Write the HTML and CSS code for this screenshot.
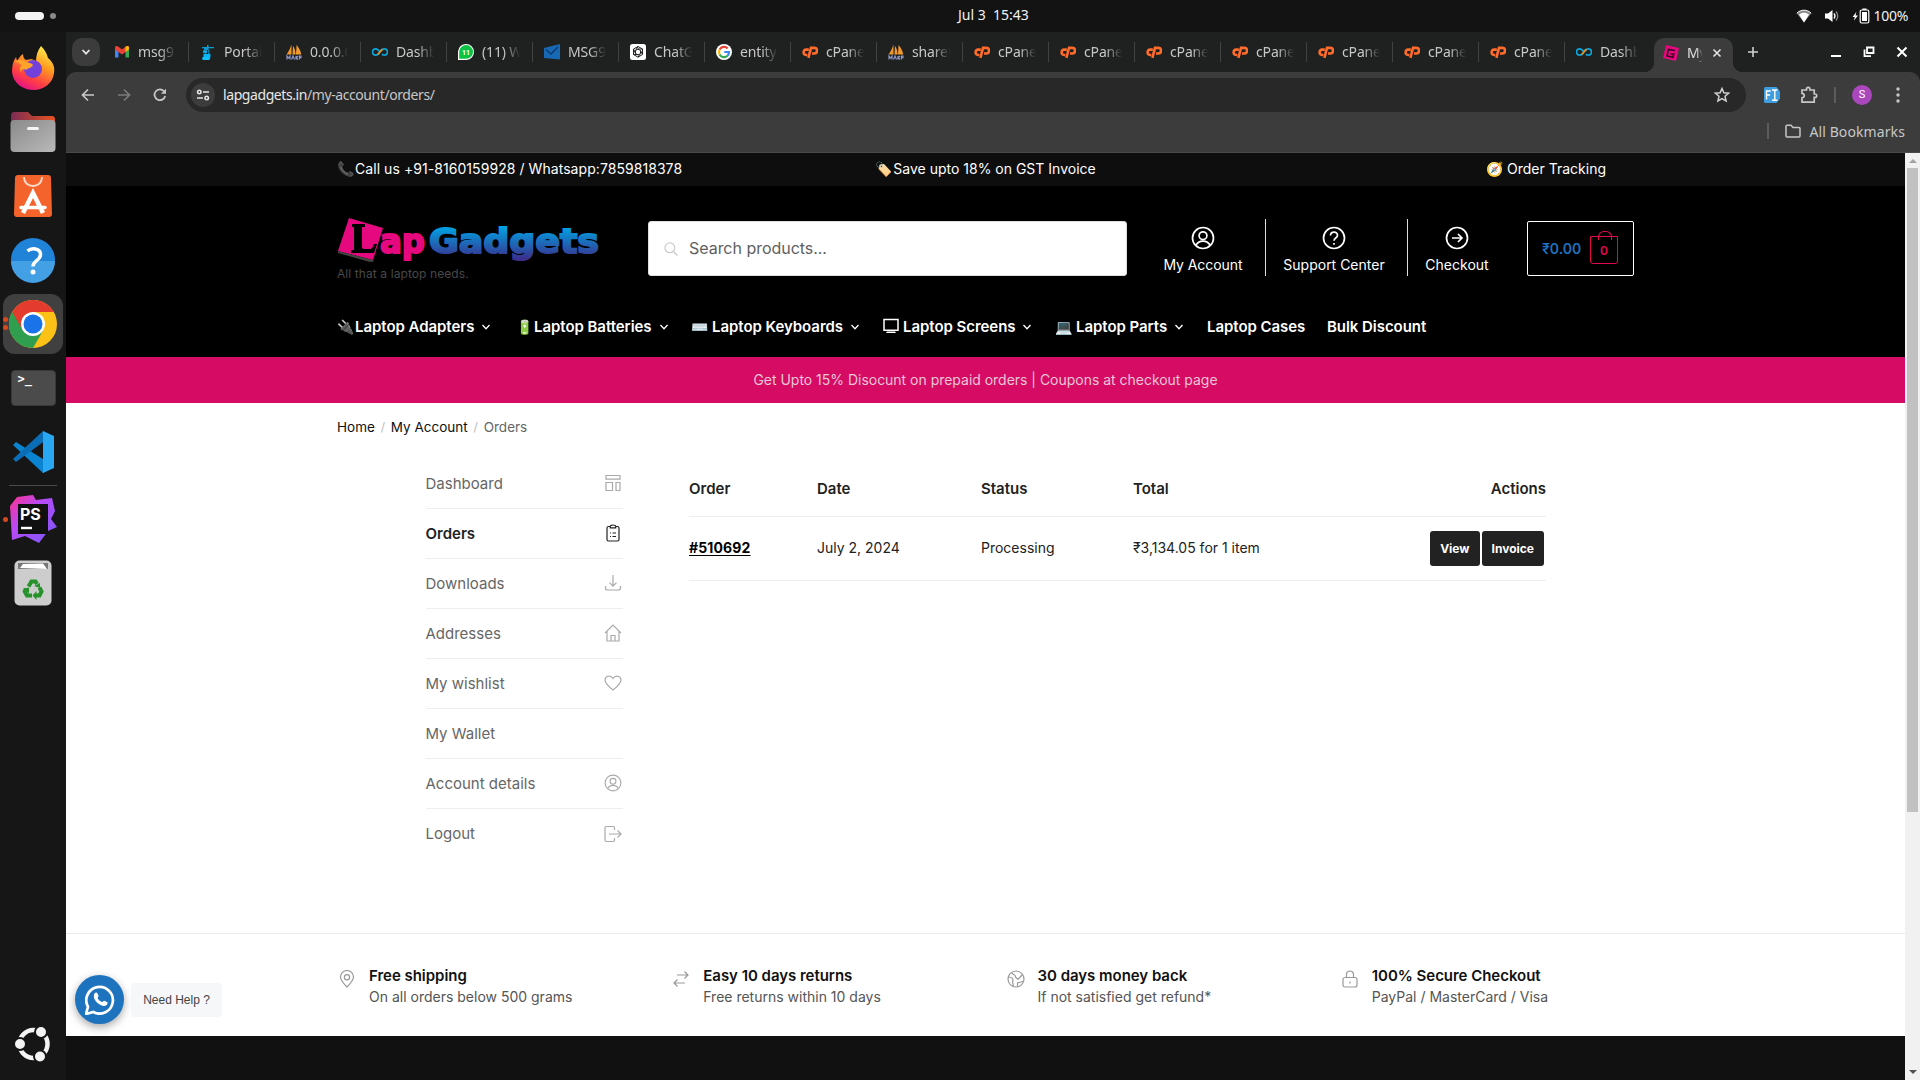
FILE: index.html
```html
<!DOCTYPE html>
<html lang="en">
<head>
<meta charset="utf-8">
<title>My Account - Orders</title>
<link rel="stylesheet" href="styles.css">
</head>
<body>
<svg class="defs" width="0" height="0" aria-hidden="true">
  <defs>
    <linearGradient id="blue" gradientUnits="userSpaceOnUse" x1="0" y1="8" x2="0" y2="44"><stop offset="0.05" stop-color="#00a4e4"/><stop offset="0.95" stop-color="#3b2e8c"/></linearGradient>
    <linearGradient id="fire" x1="0.8" y1="0" x2="0.3" y2="1"><stop offset="0" stop-color="#fff44f"/><stop offset="0.4" stop-color="#ff9a1f"/><stop offset="0.75" stop-color="#ff3b47"/><stop offset="1" stop-color="#e3108c"/></linearGradient>
    <linearGradient id="psg" x1="0" y1="0" x2="1" y2="1"><stop offset="0" stop-color="#ff318c"/><stop offset="0.4" stop-color="#b74af7"/><stop offset="1" stop-color="#765af8"/></linearGradient>
    <linearGradient id="fold" x1="0" y1="0" x2="1" y2="1"><stop offset="0" stop-color="#8a8a8a"/><stop offset="1" stop-color="#b9b9b9"/></linearGradient>
    <linearGradient id="foldback" x1="0" y1="0" x2="1" y2="0"><stop offset="0" stop-color="#7a2b53"/><stop offset="1" stop-color="#e95420"/></linearGradient>
  </defs>
  <symbol id="i-cp" viewBox="0 0 16 16"><g fill="none" stroke="#ff6c2c" stroke-width="2.6"><path d="M6.800 5.600H4.600a2.700 2.700 0 0 0-.5 5.400h1.200"/><path d="M6.400 13.800 9 3.900h3.100a2.800 2.800 0 0 1 .3 5.600H10"/></g></symbol>
  <symbol id="i-inf" viewBox="0 0 16 16"><path d="M8 8C6.400 5.500 5 4.800 3.700 4.800a3.200 3.200 0 0 0 0 6.400C5 11.200 6.400 10.500 8 8" fill="none" stroke="#0ba5dc" stroke-width="1.700"/><path d="M8 8c1.600-2.500 3-3.200 4.300-3.200a3.200 3.200 0 0 1 0 6.400c-1 0-1.800-.5-2.400-1.100" fill="none" stroke="#0ba5dc" stroke-width="1.700"/><path d="M5.500 10.600C7.500 9.500 8.300 6.500 10.500 5.300" fill="none" stroke="#e0902c" stroke-width="1.700"/></symbol>
  <symbol id="i-sail" viewBox="0 0 16 16"><path d="M5.500 0.500V10.500H0.500C2.500 7.500 4.500 4 5.500.5z" fill="#f0962a"/><path d="M7 2l-.5 8.500h3C9.500 6.500 8.500 4 7 2zM10.500 1c0 3-.2 6-.7 9.500h5.500c-.8-4-2.800-7.500-4.800-9.500z" fill="#f29a2c"/><path d="M1 15.500v-3.500l1.500 2 1.500-2v3.500M5.500 15.500 7 12l1.500 3.500M10 12v3.500M10 14l2-2M10 13.500l2 2M13.500 15.500V12H15v1.700h-1.500" stroke="#8f98c6" stroke-width="1.200" fill="none"/></symbol>
  <symbol id="i-user" viewBox="0 0 24 24"><circle cx="12" cy="12" r="10.500"/><circle cx="12" cy="9.700" r="3.900"/><path d="M4.900 19.600c1.400-3.200 4-4.400 7.100-4.400s5.700 1.200 7.100 4.400"/></symbol>
  <symbol id="i-chev" viewBox="0 0 10 10"><path d="M1.500 3 5 6.700 8.500 3" fill="none" stroke="currentColor" stroke-width="1.300"/></symbol>
</svg>

<header class="panel">
  <div class="workspaces"><span class="pill"></span><span class="dot"></span></div>
  <div class="clock">Jul 3 &nbsp;15:43</div>
  <div class="tray">
    <svg width="16" height="16" viewBox="0 0 16 16"><path d="M0.800 5.200C5 1.200 11 1.200 15.200 5.200L8 14.500z" fill="#8a8a8a"/><path d="M3 6.500c3-2.400 7-2.400 10 0L8 14.500z" fill="#fff"/><path d="M.8 5.200c4.200-4 10.200-4 14.400 0" stroke="#fff" fill="none"/></svg>
    <svg width="16" height="16" viewBox="0 0 16 16"><path d="M1 5.500h3L8.500 2v12L4 10.500H1z" fill="#fff"/><path d="M10 5.500q2 2.500 0 5" stroke="#fff" stroke-width="1.300" fill="none"/><path d="M12 3.500q3.500 4.500 0 9" stroke="#888" stroke-width="1.300" fill="none"/></svg>
    <svg class="battery" width="18" height="16" viewBox="0 0 18 16"><path d="M4.300 4 .6 9h2.200L2 12.500 6 7.500H3.600z" fill="#fff"/><rect x="8.200" y="2" width="8.600" height="13" rx="1.500" fill="none" stroke="#fff" stroke-width="1.200"/><path d="M10 4h5v9h-5zM10.500.5h4V2h-4z" fill="#fff"/></svg>
    <span>100%</span>
  </div>
</header>

<div class="desktop">
<aside class="dock">
  <div class="app"><svg width="46" height="46" viewBox="0 0 46 46"><path d="M31 1c4 4 6 8 7 12 5 4 7 9 6 15-1 10-10 17-20.500 17S3 38 2 27c0-6 1-11 4-15l1 4c2-3 3-5 6-7 0 3 1 5 3 6 4-1 7-1 10 1 0-6 2-11 5-15z" fill="url(#fire)"/><circle cx="23" cy="24" r="9" fill="#7340dc"/><path d="M4 17c4-3 8-3 12 0 3 1 6 1 7 3-1 3-5 3-7 5-2-1-4-2-5 2-2-3-1-5 1-7-3-2-5-3-8-3z" fill="#ffa32b"/></svg></div>
  <div class="app"><svg width="46" height="42" viewBox="0 0 46 42"><path d="M1 5c0-3 1-4 3-4h14l4 4h20c2 0 3 1 3 4v15H1z" fill="url(#foldback)"/><rect x="0.500" y="9" width="45" height="32" rx="4" fill="url(#fold)"/><rect x="17" y="16" width="12" height="3" rx="1.500" fill="#f5f5f5"/></svg></div>
  <div class="app"><svg width="38" height="44" viewBox="0 0 38 44"><path d="M4 1h30c2 0 3 1 3 3l1 36c0 2-1 3-3 3H3c-2 0-3-1-3-3L1 4c0-2 1-3 3-3z" fill="#f4632b"/><path d="M10 3c0 12 18 12 18 0" fill="none" stroke="#fbd9ca" stroke-width="1.800"/><path d="M9 39 19 19l10 20" fill="none" stroke="#fff" stroke-width="4.500"/><path d="M7 33.500h24" stroke="#fff" stroke-width="3.500" stroke-linecap="round"/></svg></div>
  <div class="app"><svg width="46" height="46" viewBox="0 0 46 46"><circle cx="23" cy="23" r="22" fill="#2183d8"/><path d="M1 24a22 22 0 0 0 44 0z" fill="#44a0e4"/><path d="M17.500 14c4-3.500 13-3 13 3.500 0 6-7.500 6-7.500 12" fill="none" stroke="#fff" stroke-width="3.500"/><circle cx="23" cy="35" r="2.500" fill="#fff"/></svg></div>
  <div class="app running active"><svg width="48" height="48" viewBox="0 0 48 48"><circle cx="24" cy="24" r="24" fill="#fbc116"/><path d="M24 24 3.200 12A24 24 0 0 0 24 48L34.400 30z" fill="#2f9e4f"/><path d="M24 12h20.800A24 24 0 0 0 3.200 12L13.600 30z" fill="#e33b2e"/><circle cx="24" cy="24" r="12" fill="#fff"/><circle cx="24" cy="24" r="9.500" fill="#1a73e8"/></svg></div>
  <div class="app"><div class="terminal">&gt;_</div></div>
  <div class="app"><svg width="42" height="42" viewBox="0 0 42 42"><path d="M1 14 4 11 42 35 31 42z" fill="#0a84d0"/><path d="M1 28 4 31 34 9 31 0z" fill="#0a6db5"/><path d="M31 0l11 5v32l-11 5z" fill="#2aa7f2"/></svg></div>
  <div class="dock-line"></div>
  <div class="app running-one"><svg width="48" height="48" viewBox="0 0 48 48"><path d="M8 2 24 0l3 5 16-2 3 13-4 8 6 8-9 4-9 12-14-7-13 4L1 11z" fill="url(#psg)"/><rect x="9" y="9" width="30" height="30" fill="#101010"/><text x="11" y="25" class="ps">PS</text><path d="M12 33h11" stroke="#fff" stroke-width="2.400"/></svg></div>
  <div class="app"><svg width="38" height="46" viewBox="0 0 38 46"><rect x="0.500" y="0.500" width="37" height="45" rx="5" fill="#cdcdcd"/><path d="M4 9V3h30v6z" fill="#777"/><path d="M6 8 9 4l20-.5L33 9z" fill="#fff"/><g fill="none" stroke="#27922b" stroke-width="4"><path d="m14.500 26.500 3-5h4l1.500 2.500"/><path d="m25.500 27.500 2 4-2 4h-4"/><path d="M18 35.500h-5l-2.300-4 1.300-2.500"/></g><g fill="#27922b"><path d="m20 26 6-3v5zM22.500 31v9l-4-4.500zM9 28.500l6-1v6z"/></g></svg></div>
  <div class="show-apps"><svg width="36" height="36" viewBox="0 0 36 36"><circle cx="18.500" cy="18" r="14" fill="none" stroke="#f4f4f4" stroke-width="4.500"/><g fill="#f4f4f4" stroke="#161616" stroke-width="2"><circle cx="5" cy="18" r="6"/><circle cx="26" cy="6" r="6"/><circle cx="25" cy="30.500" r="6"/></g></svg></div>
</aside>

<div class="browser">
  <div class="tabstrip">
    <div class="tab-search"><svg width="10" height="10" viewBox="0 0 10 10"><path d="M1.500 3 5 6.700 8.500 3" fill="none" stroke="#e3e3e3" stroke-width="1.800"/></svg></div>
    <div class="tab"><svg viewBox="0 0 16 16"><path d="M1 13.500V3.500l3.500 3v7z" fill="#4285f4"/><path d="M11.500 13.500v-7l3.500-3v10z" fill="#34a853"/><path d="M1 3.500c.5-1.800 2-1.800 3.500-.7L8 5.500l3.500-2.700C13 1.700 14.500 1.700 15 3.500v2L8 10.500 1 5.500z" fill="#ea4335"/><path d="M11.500 2.800C13 1.700 14.500 1.700 15 3.500v2l-3.500 2.500z" fill="#fbbc04"/></svg><span>msg9</span></div>
    <div class="tab"><svg viewBox="0 0 16 16"><path d="M2 3h5V1h1.500v2H14v1.200H8.500V6H4V4.200H2z" fill="#0f9bd0"/><path d="M4.500 5.500h2V11h-2zM8 5.500h1.500V11H8z" fill="#12789f"/><path d="M3 6.500h4v2.300H3zM3.500 10h7v3.500h-7z" fill="#06b6f2"/><path d="M2.500 13h7q1.500 3-1 3h-5q-2 0-1-3z" fill="#0fc0fa"/></svg><span>Portai</span></div>
    <div class="tab"><svg><use href="#i-sail"/></svg><span>0.0.0.0</span></div>
    <div class="tab"><svg><use href="#i-inf"/></svg><span>Dashb</span></div>
    <div class="tab"><svg viewBox="0 0 16 16"><path d="M0 16V7.500a8 8 0 1 1 8.500 8.500z" fill="#fff"/><path d="M1.200 14.800V7.700A6.900 6.900 0 1 1 8 14.800z" fill="#0dc143"/><text x="4" y="11" class="fav-num">11</text></svg><span>(11) W</span></div>
    <div class="tab"><svg viewBox="0 0 16 16"><path d="M0 4 16 0v15.500L0 14z" fill="#1769b5"/><path d="m2 5.500 5 4.500 7-7" stroke="#0a3c71" stroke-width="1.500" fill="none"/></svg><span>MSG9</span></div>
    <div class="tab"><svg viewBox="0 0 16 16"><rect width="16" height="16" rx="2.500" fill="#fff"/><g fill="none" stroke="#222" stroke-width="1"><path d="M8 2.500 12.500 5v5.500L8 13.200l-4.500-2.700V5z"/><path d="M8 5 10.500 6.500v3L8 11 5.500 9.500v-3zM8 2.500 5.500 6.500M12.500 5H8M12.500 10.500l-2-4M8 13.200l2.500-3.700M3.500 10.500H8M3.500 5l2 4.500"/></g></svg><span>ChatG</span></div>
    <div class="tab"><svg viewBox="0 0 16 16"><circle cx="8" cy="8" r="8" fill="#fff"/><g fill="none" stroke-width="2.200"><path d="M11.700 4.400A5 5 0 0 0 3.600 5.600" stroke="#ea4335"/><path d="M3.600 5.600a5 5 0 0 0 0 4.800" stroke="#fbbc05"/><path d="M3.600 10.400a5 5 0 0 0 7.900 1.400" stroke="#34a853"/><path d="M11.500 11.800A5 5 0 0 0 13 8H8.300" stroke="#4285f4"/></g></svg><span>entity</span></div>
    <div class="tab"><svg><use href="#i-cp"/></svg><span>cPane</span></div>
    <div class="tab"><svg><use href="#i-sail"/></svg><span>sharel</span></div>
    <div class="tab"><svg><use href="#i-cp"/></svg><span>cPane</span></div>
    <div class="tab"><svg><use href="#i-cp"/></svg><span>cPane</span></div>
    <div class="tab"><svg><use href="#i-cp"/></svg><span>cPane</span></div>
    <div class="tab"><svg><use href="#i-cp"/></svg><span>cPane</span></div>
    <div class="tab"><svg><use href="#i-cp"/></svg><span>cPane</span></div>
    <div class="tab"><svg><use href="#i-cp"/></svg><span>cPane</span></div>
    <div class="tab"><svg><use href="#i-cp"/></svg><span>cPane</span></div>
    <div class="tab last"><svg><use href="#i-inf"/></svg><span>Dashb</span></div>
    <div class="tab current"><svg viewBox="0 0 16 16"><path d="m3 0 13 3-3 13L0 13z" fill="#e6087e"/><path d="M12 5.500 5.500 4.500 4 11l6 1.200.8-3.200H7.500" fill="none" stroke="#3a0622" stroke-width="1.600"/></svg><span>My</span><svg class="tab-close" viewBox="0 0 10 10"><path d="m1.500 1.500 7 7m0-7-7 7" stroke="#e3e3e3" stroke-width="1.600"/></svg></div>
    <svg class="plus" width="12" height="12" viewBox="0 0 12 12"><path d="M6 1v10M1 6h10" stroke="#cfcfcf" stroke-width="1.600"/></svg>
    <div class="win-buttons">
      <svg width="12" height="12" viewBox="0 0 12 12"><path d="M1 10h10" stroke="#fff" stroke-width="2"/></svg>
      <svg width="12" height="12" viewBox="0 0 12 12"><path d="M4 1.500h6.500V7H4zM1.500 3.500v6.700H8" fill="none" stroke="#fff" stroke-width="1.800"/></svg>
      <svg width="12" height="12" viewBox="0 0 12 12"><path d="m1.500 1.500 9 9m0-9-9 9" stroke="#fff" stroke-width="2"/></svg>
    </div>
  </div>

  <div class="toolbar">
    <div class="address-row">
      <svg class="nav-back" width="14" height="14" viewBox="0 0 14 14"><path d="M13 7H2M7 1.500 1.500 7 7 12.500" fill="none" stroke="#c7c7c7" stroke-width="1.700"/></svg>
      <svg class="nav-fwd" width="14" height="14" viewBox="0 0 14 14"><path d="M1 7h11M7 1.500 12.500 7 7 12.500" fill="none" stroke="#7b7b7b" stroke-width="1.700"/></svg>
      <svg class="nav-reload" width="14" height="14" viewBox="0 0 14 14"><path d="M12.200 8A5.400 5.400 0 1 1 11 3.200l1 1" fill="none" stroke="#c7c7c7" stroke-width="1.700"/><path d="M13 .8v5H8z" fill="#c7c7c7"/></svg>
      <div class="omnibox">
        <span class="site-info"><svg width="14" height="14" viewBox="0 0 14 14"><g fill="none" stroke="#e3e3e3" stroke-width="1.600"><circle cx="3.300" cy="4" r="1.700"/><path d="M7 4h6M1 10h6"/><circle cx="10.700" cy="10" r="1.700"/></g></svg></span>
        <span class="url"><b>lapgadgets.in</b>/my-account/orders/</span>
        <svg class="star" width="16" height="16" viewBox="0 0 16 16"><path d="m8 1.500 1.900 4.300 4.700.4-3.600 3.100 1.100 4.600L8 11.500l-4.100 2.400L5 9.300 1.400 6.200l4.700-.4z" fill="none" stroke="#d0d0d0" stroke-width="1.500"/></svg>
      </div>
      <svg class="ext" width="16" height="16" viewBox="0 0 16 16"><path d="M1.500 0h11L16 4.500v7L12.500 16h-11Q0 16 0 14.500v-13Q0 0 1.500 0z" fill="#3f9ee0"/><path d="M2.500 12.500V4h4.200M2.500 8h3.500M8 3h2l.8 1v8.300l-.8 1H8M13.500 3h-2l-.7 1M10.800 12.300l.7 1h2" fill="none" stroke="#fff" stroke-width="1.400"/></svg>
      <svg class="puzzle" width="18" height="18" viewBox="0 0 18 18"><path d="M2 4h4.500V3a1.700 1.700 0 0 1 3.400 0v1h4.300v4h.8a1.700 1.700 0 0 1 0 3.400h-.8v4.800H2v-4.400c3-.3 3-4.100 0-4.400z" fill="none" stroke="#c7c7c7" stroke-width="1.700"/></svg>
      <span class="bar-sep"></span>
      <span class="avatar">S</span>
      <svg class="kebab" width="4" height="16" viewBox="0 0 4 16"><g fill="#c7c7c7"><circle cx="2" cy="2" r="1.700"/><circle cx="2" cy="8" r="1.700"/><circle cx="2" cy="14" r="1.700"/></g></svg>
    </div>
    <div class="bookmarks"><span class="bar-sep"></span><svg width="16" height="14" viewBox="0 0 16 14"><path d="M1 2.500V12q0 1 1 1h12q1 0 1-1V4.500q0-1-1-1H8L6 1.200H2q-1 0-1 1.300z" fill="none" stroke="#c7c7c7" stroke-width="1.500"/></svg><span>All Bookmarks</span></div>
  </div>

  <div class="viewport">
  <div class="site">
    <div class="site-top"><div class="wrap">
      <span class="phone"><i class="emo">📞</i>Call us +91-8160159928 / Whatsapp:7859818378</span>
      <span><i class="emo">🏷️</i>Save upto 18% on GST Invoice</span>
      <span class="track"><i class="emo">🧭</i> Order Tracking</span>
    </div></div>

    <div class="masthead">
      <div class="wrap head-row">
        <div class="brand">
          <svg width="266" height="46" viewBox="0 0 266 46"><path d="M12 1 46 11 36 43 1 34z" fill="#e6087e"/><path d="m1 34 35 9 1 1.500-4 .5L1 36z" fill="#444"/><path d="M15 7h13v3h-3v20q0 2 2 2h7q2-1 3-5h3l-3 9H14v-3h3V10h-2z" fill="#000"/><text x="43" y="35.500" class="logo-pink" textLength="45" lengthAdjust="spacingAndGlyphs">ap</text><text x="92" y="35.500" class="logo-blue" textLength="170" lengthAdjust="spacingAndGlyphs" fill="url(#blue)">Gadgets</text></svg>
          <div class="tagline">All that a laptop needs.</div>
        </div>
        <div class="search"><svg width="14" height="14" viewBox="0 0 14 14"><circle cx="5.800" cy="5.800" r="4.900" fill="none" stroke="#ccc" stroke-width="1.200"/><path d="m9.400 9.400 4 4" stroke="#ccc" stroke-width="1.400"/></svg><span>Search products...</span></div>
        <div class="quick">
          <a class="q1"><svg class="ico"><use href="#i-user"/></svg>My Account</a>
          <a class="q2"><svg class="ico" viewBox="0 0 24 24"><circle cx="12" cy="12" r="10.500"/><path d="M8.500 9.500c0-4.500 7-4.500 7-.3 0 2.800-3.500 2.800-3.500 5.500M12 17v1.700"/></svg>Support Center</a>
          <a class="q3"><svg class="ico" viewBox="0 0 24 24"><circle cx="12" cy="12" r="10.500"/><path d="M7 12h9.500M13 8l4 4-4 4"/></svg>Checkout</a>
        </div>
        <div class="cart"><span>₹0.00</span><div class="bag">0</div></div>
      </div>
      <nav class="wrap main-nav">
        <a><i class="emo">🔌</i>Laptop Adapters<svg><use href="#i-chev"/></svg></a>
        <a><i class="emo">🔋</i>Laptop Batteries<svg><use href="#i-chev"/></svg></a>
        <a><i class="emo wide">⌨️</i>Laptop Keyboards<svg><use href="#i-chev"/></svg></a>
        <a><svg class="screen" viewBox="0 0 16 16"><path d="M1 1.500h14v10.800H1z" fill="none" stroke="#fff" stroke-width="1.500"/><path d="M4 13.500h8L13 15H3z" fill="#fff"/></svg>Laptop Screens<svg><use href="#i-chev"/></svg></a>
        <a><i class="emo wide">💻</i>Laptop Parts<svg><use href="#i-chev"/></svg></a>
        <a>Laptop Cases</a>
        <a>Bulk Discount</a>
      </nav>
    </div>
    <div class="promo">Get Upto 15% Disocunt on prepaid orders | Coupons at checkout page</div>

    <div class="wrap crumbs"><a>Home</a><i>/</i><a>My Account</a><i>/</i><span>Orders</span></div>

    <main class="account">
      <ul class="menu">
        <li>Dashboard<svg viewBox="0 0 18 18"><path d="M2 1.500h14v3.600H2zM2 8.500h6.500v8H2zM12 8.500h4v8h-4z"/></svg></li>
        <li class="on">Orders<svg viewBox="0 0 18 18"><path d="M6 2.500H4.500Q3 2.500 3 4v11.500Q3 17 4.500 17h9q1.500 0 1.500-1.500V4q0-1.500-1.500-1.500H12M6.300 3.800V2.500Q6.300 1 9 1t2.700 1.500v1.300zM6 9h1M8.500 9H12M6 12.500h1m1.500 0H12"/></svg></li>
        <li>Downloads<svg viewBox="0 0 18 18"><path d="M9 1v11M5.500 8.700 9 12.200l3.500-3.500M1.500 12v2q0 2 2 2h11q2 0 2-2v-2"/></svg></li>
        <li>Addresses<svg viewBox="0 0 18 18"><path d="m1 9 8-8 8 8M3 7.500V17h12V7.500M7 17v-5.500h4V17"/></svg></li>
        <li>My wishlist<svg viewBox="0 0 18 18"><path d="M9 16C4 12 1 9 1 6c0-4 5.500-5.500 8-1.500C11.500.500 17 2 17 6c0 3-3 6-8 10z"/></svg></li>
        <li>My Wallet</li>
        <li>Account details<svg class="u"><use href="#i-user"/></svg></li>
        <li>Logout<svg viewBox="0 0 18 18"><path d="M10.500 5V3q0-1.500-1.500-1.500H2.500Q1 1.500 1 3v12q0 1.500 1.500 1.500H9q1.500 0 1.500-1.500v-2M5 9h12M13.500 5.500 17 9l-3.500 3.500"/></svg></li>
      </ul>
      <table class="orders">
        <thead><tr><th class="c1">Order</th><th class="c2">Date</th><th class="c3">Status</th><th class="c4">Total</th><th class="c5">Actions</th></tr></thead>
        <tbody><tr><td><a>#510692</a></td><td>July 2, 2024</td><td>Processing</td><td>₹3,134.05 for 1 item</td><td class="acts"><div><b>View</b><b>Invoice</b></div></td></tr></tbody>
      </table>
    </main>

    <section class="perks"><div class="wrap">
      <div class="perk"><svg viewBox="0 0 18 18"><path d="M9 17C5 13 2.500 10.500 2.500 7a6.500 6.500 0 0 1 13 0C15.500 10.500 13 13 9 17z"/><circle cx="9" cy="7.300" r="2.600"/></svg><div><h4>Free shipping</h4><p>On all orders below 500 grams</p></div></div>
      <div class="perk"><svg viewBox="0 0 18 18"><path d="M5 5h11M12.500 1.500 16 5l-3.500 3.500M13 13H2M5.500 9.500 2 13l3.500 3.500"/></svg><div><h4>Easy 10 days returns</h4><p>Free returns within 10 days</p></div></div>
      <div class="perk"><svg viewBox="0 0 18 18"><circle cx="9" cy="9" r="8"/><path d="M5 2.500C5 5 9 4 8.500 7L11 9.500 15.500 4.500M1.500 7C5 7 7 9 5.500 11.500L6.500 16.500M10.500 16.800V13l5.500-1.500"/></svg><div><h4>30 days money back</h4><p>If not satisfied get refund*</p></div></div>
      <div class="perk"><svg viewBox="0 0 18 18"><rect x="2" y="7.500" width="14" height="9.500" rx="2"/><path d="M5.500 7.500V4.500a3.500 3.500 0 0 1 7 0v3M9 11.500v2"/></svg><div><h4>100% Secure Checkout</h4><p>PayPal / MasterCard / Visa</p></div></div>
    </div></section>
    <footer class="site-foot"></footer>

    <div class="help"><span class="bubble"><svg width="30" height="30" viewBox="0 0 30 30"><path d="M1 29l2-7.200A13.300 13.300 0 1 1 8.300 27z" fill="none" stroke="#fff" stroke-width="2.700"/><path d="M9.500 8.500c1-1.600 2.500-1.300 3 0l1 2.300c.3 1-.8 1.700-1 2.300 1 2 2.500 3.300 4.500 4 .8-.2 1.400-1.700 2.300-1.400l2.700 1.300c1 .5.500 2.300-.3 3-2.500 2-6.700.3-9.200-2-2.700-2.500-4.700-6-3-9.500z" fill="#fff"/></svg></span><span class="need">Need Help ?</span></div>
  </div>
  <div class="scrollbar"><i class="up"></i><i class="thumb"></i><i class="down"></i></div>
  </div>
</div>
</div>
</body>
</html>
```
FILE: styles.css
```css
* { box-sizing: border-box; }
body { margin: 0; width: 1920px; height: 1080px; overflow: hidden; display: flex; flex-direction: column; background: #131313; font-family: Inter, "Noto Sans", sans-serif; }
svg { display: block; flex: none; }
.defs { position: absolute; }
.wrap { width: 1297px; margin: 0 auto; }

/* system panel */
.panel { height: 32px; flex: none; display: grid; grid-template-columns: 1fr auto 1fr; align-items: center; background: #131313; color: #f2f2f2; font: 14px "Noto Sans", sans-serif; }
.workspaces { display: flex; align-items: center; gap: 6px; padding-left: 15px; }
.pill { width: 29px; height: 8px; border-radius: 4px; background: #f2f2f2; }
.dot { width: 6px; height: 6px; border-radius: 50%; background: #8a8a8a; }
.clock { width: 138px; padding: 0 0 4px 67px; letter-spacing: 0; white-space: nowrap; }
.tray { display: flex; align-items: center; justify-content: flex-end; gap: 12px; padding-right: 12px; }
.tray .battery { margin-right: -8px; }
.tray span { letter-spacing: -.3px; padding-bottom: 1px; }

.desktop { flex: 1; display: flex; min-height: 0; }

/* dock */
.dock { width: 66px; flex: none; display: flex; flex-direction: column; align-items: center; padding-top: 6px; background: #161616; }
.app { position: relative; width: 60px; height: 60px; margin-bottom: 4px; border-radius: 12px; display: flex; align-items: center; justify-content: center; }
.app.active { background: #404040; }
.running::before, .running::after, .running-one::before { content: ""; position: absolute; left: 0; top: 23px; width: 5px; height: 5px; border-radius: 50%; background: #d9481c; }
.running::after { top: 31px; }
.running-one::before { top: 28px; }
.terminal { width: 45px; height: 36px; border-radius: 4px; background: #4b4b4b; color: #fff; font: bold 12px/16px "DejaVu Sans Mono", monospace; padding-left: 6px; border: 1px solid #393939; }
.dock-line { width: 48px; height: 1px; background: #4a4a4a; margin: -1px 0 3px; }
.ps { font: bold 16px Inter, sans-serif; fill: #fff; }
.show-apps { margin-top: auto; padding-bottom: 18px; }

/* browser frame */
.browser { flex: 1; display: flex; flex-direction: column; min-width: 0; background: #1f2020; font-family: "Noto Sans", sans-serif; }
.tabstrip { height: 40px; flex: none; display: flex; align-items: center; color: #c7c7c7; font-size: 14px; }
.tab-search { width: 28px; height: 28px; margin: 0 3px 0 6px; border-radius: 10px; background: #3c3c3c; display: flex; align-items: center; justify-content: center; flex: none; }
.tab { width: 86px; height: 20px; flex: none; display: flex; align-items: center; padding-left: 11px; border-right: 1px solid #424242; }
.tab svg { width: 16px; height: 16px; }
.tab span { width: 39px; margin-left: 8px; overflow: hidden; white-space: nowrap; line-height: 20px; letter-spacing: -.15px; -webkit-mask-image: linear-gradient(90deg, #000 55%, transparent 98%); mask-image: linear-gradient(90deg, #000 55%, transparent 98%); }
.fav-num { font: bold 7px Roboto, sans-serif; fill: #fff; }
.tab.last { border-right-color: transparent; }
.tab.current { position: relative; width: 79px; height: 34px; align-self: flex-end; margin-left: 3px; padding: 0 0 4px 9px; border: 0; border-radius: 10px 10px 0 0; background: #3c3c3c; color: #e3e3e3; }
.tab.current::before, .tab.current::after { content: ""; position: absolute; bottom: 0; width: 10px; height: 10px; }
.tab.current::before { left: -10px; background: radial-gradient(circle at 0 0, transparent 10px, #3c3c3c 10.500px); }
.tab.current::after { right: -10px; background: radial-gradient(circle at 100% 0, transparent 10px, #3c3c3c 10.500px); }
.tab.current span { width: 16px; }
.tab svg.tab-close { width: 10px; height: 10px; margin-left: 9px; }
.plus { margin-left: 14px; }
.win-buttons { margin-left: auto; display: flex; gap: 21px; padding-right: 12px; }

.toolbar { height: 81px; flex: none; background: #3c3c3c; border-radius: 10px 10px 0 0; border-bottom: 1px solid #4a4a4a; }
.address-row { height: 46px; display: flex; align-items: center; }
.nav-back { margin-left: 15px; }
.nav-fwd { margin-left: 22px; }
.nav-reload { margin: 0 19px 0 22px; }
.omnibox { width: 1560px; height: 34px; border-radius: 17px; background: #282828; display: flex; align-items: center; flex: none; }
.site-info { width: 24px; height: 24px; margin-left: 5px; border-radius: 50%; background: #3c3c3c; display: flex; align-items: center; justify-content: center; }
.url { margin-left: 8px; padding-bottom: 2px; font-size: 14px; color: #c7c7c7; letter-spacing: -.42px; }
.url b { font-weight: 400; color: #e9e9e9; }
.star { margin-left: auto; margin-right: 16px; }
.ext { margin-left: 18px; }
.puzzle { margin-left: 20px; }
.bar-sep { width: 2px; height: 16px; background: #5c5c5c; }
.address-row .bar-sep { margin-left: 16px; }
.avatar { width: 20px; height: 20px; margin-left: 16px; border-radius: 50%; background: #ab47bc; color: #fff; font: 11px/20px Roboto, sans-serif; text-align: center; }
.kebab { margin-left: 24px; }
.bookmarks { height: 28px; display: flex; align-items: center; justify-content: flex-end; padding: 0 15px 2px 0; color: #c7c7c7; font-size: 14px; letter-spacing: .1px; }
.bookmarks svg { margin: 0 8px 0 16px; }

/* page */
.viewport { flex: 1; display: flex; min-height: 0; }
.site { position: relative; width: 1839px; background: #fff; font-family: Inter, "Noto Sans", sans-serif; display: flex; flex-direction: column; }
.emo { font-style: normal; display: inline-block; width: 18px; white-space: nowrap; font-size: 14px; }
.site-top { height: 33px; background: #0e0e0e; color: #fff; font-size: 14px; }
.site-top .wrap { display: grid; grid-template-columns: 1fr auto 1fr; line-height: 32px; padding: 0 0; }
.phone { letter-spacing: .06px; }
.track { text-align: right; padding-right: 28px; }
.masthead { height: 171px; background: #000; color: #fff; }
.head-row { height: 119px; display: flex; padding-top: 31px; }
.brand { width: 311px; }
.logo-pink, .logo-blue { font: bold 34px "DejaVu Sans", sans-serif; stroke-width: 2px; }
.logo-pink { fill: #e6087e; stroke: #e6087e; }
.logo-blue { stroke: url(#blue); }
.tagline { font-size: 12px; line-height: 18px; margin-top: 2px; color: #484848; letter-spacing: .09px; }
.search { width: 479px; height: 55px; margin-top: 4px; border: 1px solid #ddd; border-radius: 3px; background: #fff; display: flex; align-items: center; gap: 11px; padding-left: 15px; color: #5f5f5f; font-size: 16px; }
.search span { padding-bottom: 2px; letter-spacing: -.03px; }
.quick { display: flex; height: 57px; margin-top: 2px; margin-left: 15px; font-size: 14px; }
.quick a { display: flex; flex-direction: column; align-items: center; padding-top: 7px; line-height: 20px; white-space: nowrap; }
.ico { width: 24px; height: 24px; margin-bottom: 5px; fill: none; stroke: #fff; stroke-width: 1.700; }
.quick .q1, .quick .q2 { border-right: 1px solid #ddd; }
.quick .q1 { width: 124px; padding-right: 1px; letter-spacing: -.05px; }
.quick .q2 { width: 142px; padding-right: 5px; }
.quick .q3 { width: 99px; padding-right: 1px; }
.cart { width: 107px; height: 55px; margin: 4px 0 0 auto; border: 1px solid #fff; border-radius: 2px; display: flex; align-items: center; padding-left: 14px; color: #1e73be; font-size: 14px; font-weight: 600; }
.bag { position: relative; width: 28px; height: 28px; margin-left: auto; margin-right: 15px; margin-top: 2px; border: 1px solid #e4094f; border-radius: 0 0 3px 3px; color: #e4094f; font-size: 12px; line-height: 28px; text-align: center; font-weight: 600; }
.bag::before { content: ""; position: absolute; left: 7px; top: -6px; width: 12px; height: 8px; border: 1px solid #e4094f; border-bottom: 0; border-radius: 6px 6px 0 0; }
.main-nav { display: grid; grid-template-columns: 179px 175px 191px 173px 152px 120px auto; height: 42px; align-items: center; font-size: 15px; font-weight: 600; letter-spacing: -.05px; }
.main-nav a { display: flex; align-items: center; white-space: nowrap; }
.main-nav a svg { width: 10px; height: 10px; margin: 2px 0 0 7px; }
.main-nav a svg.screen { width: 16px; height: 16px; margin: 0 4px 1px 1px; }
.emo.wide { width: 21px; }
.promo { height: 46px; background: #d60b64; color: #e9c6d6; font-size: 14px; line-height: 46px; text-align: center; letter-spacing: -.02px; }
.crumbs { height: 48px; line-height: 48px; font-size: 13.500px; color: #666; display: flex; }
.crumbs a { color: #111; }
.crumbs i { font-style: normal; font-size: 12px; color: #bbb; width: 16px; text-align: center; }

.account { height: 482px; margin-left: 359.500px; width: 1121px; display: flex; align-items: flex-start; padding-top: 8px; }
.menu { list-style: none; margin: 0; padding: 0; width: 197px; font-size: 15px; color: #666; }
.menu li { height: 50px; border-bottom: 1px solid #eee; display: flex; justify-content: space-between; align-items: center; padding: 0 1px 1px 0; }
.menu li:last-child { border: 0; }
.menu li.on { color: #222; font-weight: 600; }
.menu svg { width: 18px; height: 18px; fill: none; stroke: #aaa; stroke-width: 1.200; }
.menu svg.u { stroke-width: 1.500; }
.menu .on svg { stroke: #222; }
.orders { width: 857px; margin: -1px 0 0 66.500px; border-collapse: collapse; table-layout: fixed; font-size: 14px; color: #222; }
.orders th, .orders td { padding: 0; text-align: left; border-bottom: 1px solid #eee; }
.orders th { height: 58px; font-size: 15px; font-weight: 600; padding-top: 3px; }
.orders td { height: 64px; padding-bottom: 1px; }
.c1 { width: 128px; }
.c2 { width: 164px; }
.c3 { width: 152px; }
.c4 { width: 200px; }
.orders th.c5 { text-align: right; }
.orders td a { color: #000; font-weight: 700; text-decoration: underline; text-underline-offset: 2px; letter-spacing: .15px; }
.acts div { display: flex; justify-content: flex-end; gap: 2px; padding: 1px 2px 0 0; }
.acts b { height: 35px; padding: 0 10px; background: #222; color: #fff; border-radius: 3px; font-size: 12px; font-weight: 700; line-height: 35px; }

.perks { height: 103px; border-top: 1px solid #ebebeb; }
.perks .wrap { display: grid; grid-template-columns: repeat(4, 334.250px); padding-top: 32px; }
.perk { display: flex; gap: 13px; }
.perk svg { width: 18px; height: 18px; margin: 4px 0 0 1px; fill: none; stroke: #999; stroke-width: 1.200; }
.perk h4 { margin: 0; font-size: 15px; line-height: 20px; font-weight: 600; color: #111; letter-spacing: -.03px; }
.perk p { margin: 1px 0 0; font-size: 14px; line-height: 20px; color: #555; }
.site-foot { flex: 1; background: #111; }

.help { position: absolute; left: 9px; top: 822px; display: flex; align-items: center; gap: 7px; }
.bubble { width: 49px; height: 49px; border-radius: 50%; background: #1e73be; display: flex; align-items: center; justify-content: center; box-shadow: 0 3px 8px rgba(0, 0, 0, .35); }
.need { width: 91px; height: 34px; border-radius: 4px; background: #f5f7f9; color: #444; font: 12px/34px "Liberation Sans", Arial, sans-serif; text-align: center; }

.scrollbar { width: 15px; background: #f1f1f1; display: flex; flex-direction: column; align-items: center; padding: 6px 0; }
.scrollbar i { display: block; }
.up { border: 4px solid transparent; border-top: 0; border-bottom: 4px solid #a3a3a3; }
.thumb { width: 11px; height: 644px; margin-top: 5px; background: #c1c1c1; }
.down { margin-top: auto; border: 4px solid transparent; border-bottom: 0; border-top: 4px solid #505050; }
```
